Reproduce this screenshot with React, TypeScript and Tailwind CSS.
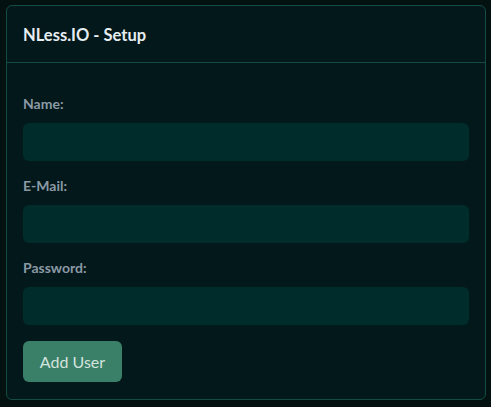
import React from "react";

export default function App() {
  const fields = [
    { label: "Name:", type: "text" },
    { label: "E-Mail:", type: "email" },
    { label: "Password:", type: "password" },
  ];
  return (
    <div
      className="w-[491px] h-[407px] bg-[#031111] pl-[6px] pr-[5px] pt-[5px]"
      style={{ fontFamily: "Lato, 'Noto Sans', sans-serif" }}
    >
      <div className="w-[480px] h-[395px] rounded-[6px] border border-[#124c44] bg-[#02181a] flex flex-col">
        <div className="h-[57px] border-b border-[#124c44] px-4 pt-[18px]">
          <h1 className="text-[16.5px] leading-[22px] font-bold text-[#e6edf1]">NLess.IO - Setup</h1>
        </div>
        <div className="px-4 pt-[32px] pb-4 flex flex-col">
          {fields.map((f) => (
            <div key={f.label} className="mb-4 flex flex-col">
              <label className="text-[14px] leading-[18px] font-bold text-[#8b9aa6] mb-[10px]">{f.label}</label>
              <input
                type={f.type}
                className="h-[38px] w-full rounded-[6px] bg-[#002d2b] outline-none border-0 text-[#e6edf1] px-3"
              />
            </div>
          ))}
          <div>
            <button className="h-[41px] w-[99px] rounded-[6px] bg-[#3a8068] text-[16px] text-[#d5e3dd]">
              Add User
            </button>
          </div>
        </div>
      </div>
    </div>
  );
}
